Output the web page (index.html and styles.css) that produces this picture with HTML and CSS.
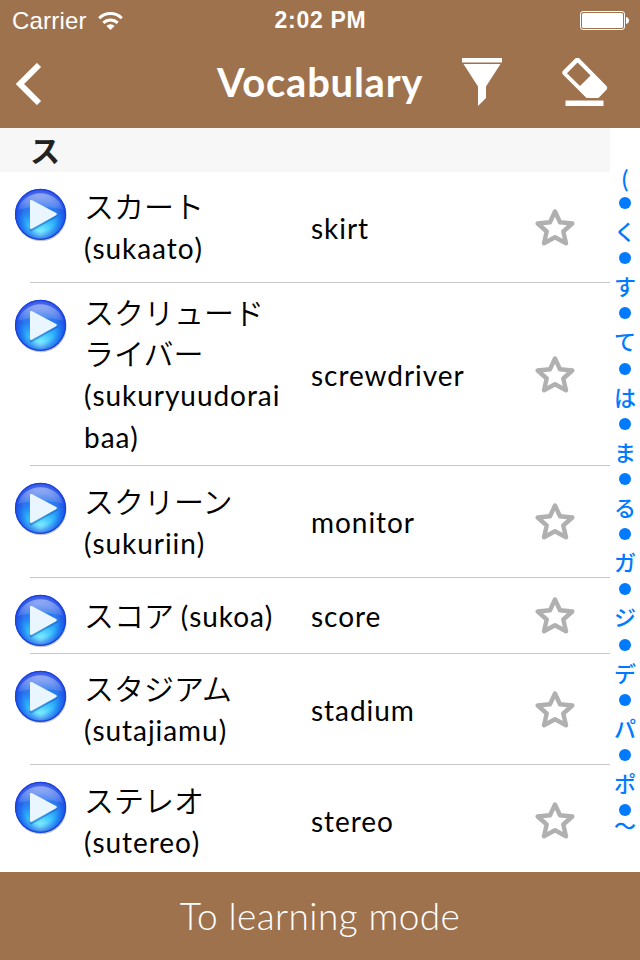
FILE: index.html
```html
<!DOCTYPE html>
<html lang="ja">
<head>
  <meta charset="UTF-8">
  <meta name="viewport" content="width=device-width, initial-scale=1.0">
  <title>Vocabulary</title>
  <link rel="stylesheet" href="styles.css">
</head>
<body>

  <!-- shared icons -->
  <svg class="defs" width="0" height="0">
    <defs>
      <linearGradient id="ball" x1="0" y1="0" x2="0" y2="1">
        <stop offset="0" stop-color="#6a86ee"/>
        <stop offset="0.45" stop-color="#2a70ee"/>
        <stop offset="0.7" stop-color="#1e90f8"/>
        <stop offset="1" stop-color="#3cc0fb"/>
      </linearGradient>
      <radialGradient id="glow" cx="0.5" cy="0.9" r="0.65">
        <stop offset="0" stop-color="#8ffcff"/>
        <stop offset="0.5" stop-color="#35c0ff" stop-opacity="0.8"/>
        <stop offset="1" stop-color="#1a80f0" stop-opacity="0"/>
      </radialGradient>
      <radialGradient id="edge" cx="0.5" cy="0.5" r="0.5">
        <stop offset="0.65" stop-color="#1438e0" stop-opacity="0"/>
        <stop offset="1" stop-color="#1438e0" stop-opacity="0.65"/>
      </radialGradient>
      <linearGradient id="shine" x1="0" y1="0" x2="0" y2="1">
        <stop offset="0" stop-color="#fff" stop-opacity="0.4"/>
        <stop offset="1" stop-color="#fff" stop-opacity="0.08"/>
      </linearGradient>
    </defs>
    <symbol id="play" viewBox="0 0 54 54">
      <circle cx="27" cy="27.6" r="25.6" fill="#8a8a9a" opacity="0.5"/>
      <circle cx="26.5" cy="26.3" r="25.3" fill="url(#ball)"/>
      <circle cx="26.5" cy="26.3" r="25.3" fill="url(#glow)"/>
      <circle cx="26.5" cy="26.3" r="25.3" fill="url(#edge)"/>
      <path d="M4 22a23 21 0 0 1 45 0c-10-4-34-4-45 0z" fill="url(#shine)"/>
      <circle cx="26.5" cy="26.3" r="25" fill="none" stroke="#1a3fdd" stroke-width="1.2"/>
      <path d="M17 14.5l25 13.300-25 14.200z" fill="#1554b8" stroke="#1554b8" stroke-width="3" stroke-linejoin="round" opacity="0.45"/>
      <path d="M17.200 13.200l24.300 13-24.300 13.400z" fill="#e9f5ff" stroke="#e9f5ff" stroke-width="2.600" stroke-linejoin="round"/>
    </symbol>
    <symbol id="star" viewBox="0 0 40 40">
      <path d="M20 3.500L25 14.200 37.300 15.500 28.300 23.500 31 35.300 20 29.300 9 35.300 11.700 23.500 2.700 15.500 15 14.200z" fill="none" stroke="#b0b0b0" stroke-width="4.400" stroke-linejoin="round"/>
    </symbol>
  </svg>

  <header class="top">
    <div class="status">
      <div class="carrier">
        <span class="carrier-name">Carrier</span>
        <svg width="25" height="18" viewBox="0 0 25 18" fill="none" stroke="#fff" stroke-width="3">
          <path d="M1.200 6.200a16 16 0 0 1 22.600 0"/>
          <path d="M5.300 10.900a10.200 10.200 0 0 1 14.400 0"/>
          <path d="M8.400 14a5.800 5.800 0 0 1 8.200 0L12.500 18z" fill="#fff" stroke="none"/>
        </svg>
      </div>
      <span class="time">2:02 PM</span>
      <svg class="battery" width="49" height="19" viewBox="0 0 49 19">
        <rect x="0.500" y="0.500" width="44" height="18" rx="2.500" fill="none" stroke="#fff"/>
        <rect x="2" y="2" width="41" height="15" rx="1.500" fill="#fff"/>
        <path d="M46 6c4 0.500 4 6.500 0 7z" fill="#fff"/>
      </svg>
    </div>
    <div class="nav">
      <svg class="back" width="26" height="42" viewBox="0 0 26 42">
        <path d="M23 2L4 21l19 19" fill="none" stroke="#fff" stroke-width="6"/>
      </svg>
      <h1>Vocabulary</h1>
      <div class="actions">
        <svg width="40" height="48" viewBox="0 0 40 48" fill="#fff">
          <rect width="40" height="4.500"/>
          <path d="M1.500 6h37L24 28.500V40l-8 8V28.500z"/>
        </svg>
        <svg width="46" height="48" viewBox="0 0 46 48" fill="#fff">
          <path fill-rule="evenodd" d="M13.300 0.500a3 3 0 0 1 4.200 0L44.200 27.800a3 3 0 0 1 0 4.200L36.500 40H24.500L1.200 16.800a3 3 0 0 1 0-4.200zM15.500 4.500L5 15.300 18 28 28.600 17.500z"/>
          <rect x="3.500" y="42.500" width="38" height="5.500"/>
        </svg>
      </div>
    </div>
  </header>

  <main class="content">
    <section class="list">
      <h2>ス</h2>
      <div class="row">
        <svg class="play"><use href="#play"/></svg>
        <p class="word">スカート<br><span>(sukaato)</span></p>
        <p class="meaning">skirt</p>
        <svg class="star"><use href="#star"/></svg>
      </div>
      <div class="row row-tall">
        <svg class="play"><use href="#play"/></svg>
        <p class="word">スクリュード<br>ライバー<br><span>(sukuryuudorai</span><br><span>baa)</span></p>
        <p class="meaning">screwdriver</p>
        <svg class="star"><use href="#star"/></svg>
      </div>
      <div class="row row-plus">
        <svg class="play"><use href="#play"/></svg>
        <p class="word">スクリーン<br><span>(sukuriin)</span></p>
        <p class="meaning">monitor</p>
        <svg class="star"><use href="#star"/></svg>
      </div>
      <div class="row row-short">
        <svg class="play"><use href="#play"/></svg>
        <p class="word">スコア <span>(sukoa)</span></p>
        <p class="meaning">score</p>
        <svg class="star"><use href="#star"/></svg>
      </div>
      <div class="row">
        <svg class="play"><use href="#play"/></svg>
        <p class="word">スタジアム<br><span>(sutajiamu)</span></p>
        <p class="meaning">stadium</p>
        <svg class="star"><use href="#star"/></svg>
      </div>
      <div class="row row-plus">
        <svg class="play"><use href="#play"/></svg>
        <p class="word">ステレオ<br><span>(sutereo)</span></p>
        <p class="meaning">stereo</p>
        <svg class="star"><use href="#star"/></svg>
      </div>
    </section>

    <nav class="index">
      <span class="first">(</span><i></i>
      <span>く</span><i></i>
      <span>す</span><i></i>
      <span>て</span><i></i>
      <span>は</span><i></i>
      <span>ま</span><i></i>
      <span>る</span><i></i>
      <span>ガ</span><i></i>
      <span>ジ</span><i></i>
      <span>デ</span><i></i>
      <span>パ</span><i></i>
      <span>ポ</span><i></i>
      <span class="last">〜</span>
    </nav>
  </main>

  <footer class="mode">To learning mode</footer>

</body>
</html>
```
FILE: styles.css
```css
* {
  box-sizing: border-box;
  margin: 0;
  padding: 0;
}

body {
  width: 640px;
  height: 960px;
  display: flex;
  flex-direction: column;
  overflow: hidden;
  background: #fff;
  color: #000;
  font-family: Lato, "Noto Sans CJK JP", sans-serif;
}

.defs {
  position: absolute;
}

.top {
  height: 128px;
  background: #9e724d;
  color: #fff;
}

.status {
  height: 40px;
  padding: 1px 11px 0 12px;
  display: grid;
  grid-template-columns: 1fr auto 1fr;
  align-items: center;
  font-family: "Liberation Sans", sans-serif;
  font-size: 24px;
}

.carrier {
  display: flex;
  align-items: center;
  gap: 11px;
}

.carrier-name {
  letter-spacing: 0.2px;
}

.time {
  font-weight: bold;
  font-size: 23px;
  letter-spacing: 0.7px;
}

.battery {
  justify-self: end;
}

.nav {
  height: 88px;
  padding: 0 32px 0 16px;
  display: grid;
  grid-template-columns: 201px 1fr 146px;
  align-items: center;
}

.nav h1 {
  font-size: 40px;
  line-height: 48px;
  font-weight: bold;
  letter-spacing: 0.75px;
  margin-top: -4px;
}

.actions {
  display: flex;
  justify-content: space-between;
  margin-top: -4px;
}

.content {
  height: 744px;
  display: flex;
}

.list {
  width: 610px;
  overflow: hidden;
}

.list h2 {
  height: 44px;
  padding-left: 30px;
  background: #f7f7f7;
  color: #222;
  font-size: 30px;
  line-height: 44px;
  font-weight: bold;
}

.row {
  position: relative;
  height: 111px;
  padding: 0 35px 0 14px;
  display: grid;
  grid-template-columns: 70px 227px 1fr 40px;
  align-items: center;
}

.row::after {
  content: "";
  position: absolute;
  left: 30px;
  right: 0;
  bottom: 0;
  height: 1px;
  background: #c8c7cc;
}

.row-tall {
  height: 183px;
}

.row-plus {
  height: 112px;
}

.row-short {
  height: 76px;
}

.play {
  align-self: start;
  width: 54px;
  height: 54px;
  margin-top: 16px;
}

.word {
  margin-top: -2px;
  font-family: "Noto Sans CJK JP", sans-serif;
  font-weight: 350;
  font-size: 30px;
  line-height: 41px;
}

.word span,
.meaning {
  font-family: Lato, sans-serif;
  font-weight: 400;
  font-size: 28px;
  line-height: 40px;
  letter-spacing: 0.95px;
}

.star {
  width: 40px;
  height: 40px;
}

.index {
  width: 30px;
  padding-top: 35px;
  display: flex;
  flex-direction: column;
  align-items: center;
  color: #007aff;
  font-size: 22px;
  font-weight: 500;
  font-family: "Noto Sans CJK JP", sans-serif;
}

.index span {
  height: 43.2px;
  line-height: 42px;
}

.index i {
  flex: none;
  width: 12px;
  height: 12px;
  border-radius: 50%;
  background: #007aff;
}

.index .first {
  height: 34px;
  line-height: 28px;
}

.index .last {
  height: 20px;
  line-height: 16px;
}

.mode {
  height: 88px;
  background: #9e724d;
  color: #fff;
  font-weight: 300;
  font-size: 37px;
  line-height: 87px;
  letter-spacing: 0.4px;
  text-align: center;
}
```
